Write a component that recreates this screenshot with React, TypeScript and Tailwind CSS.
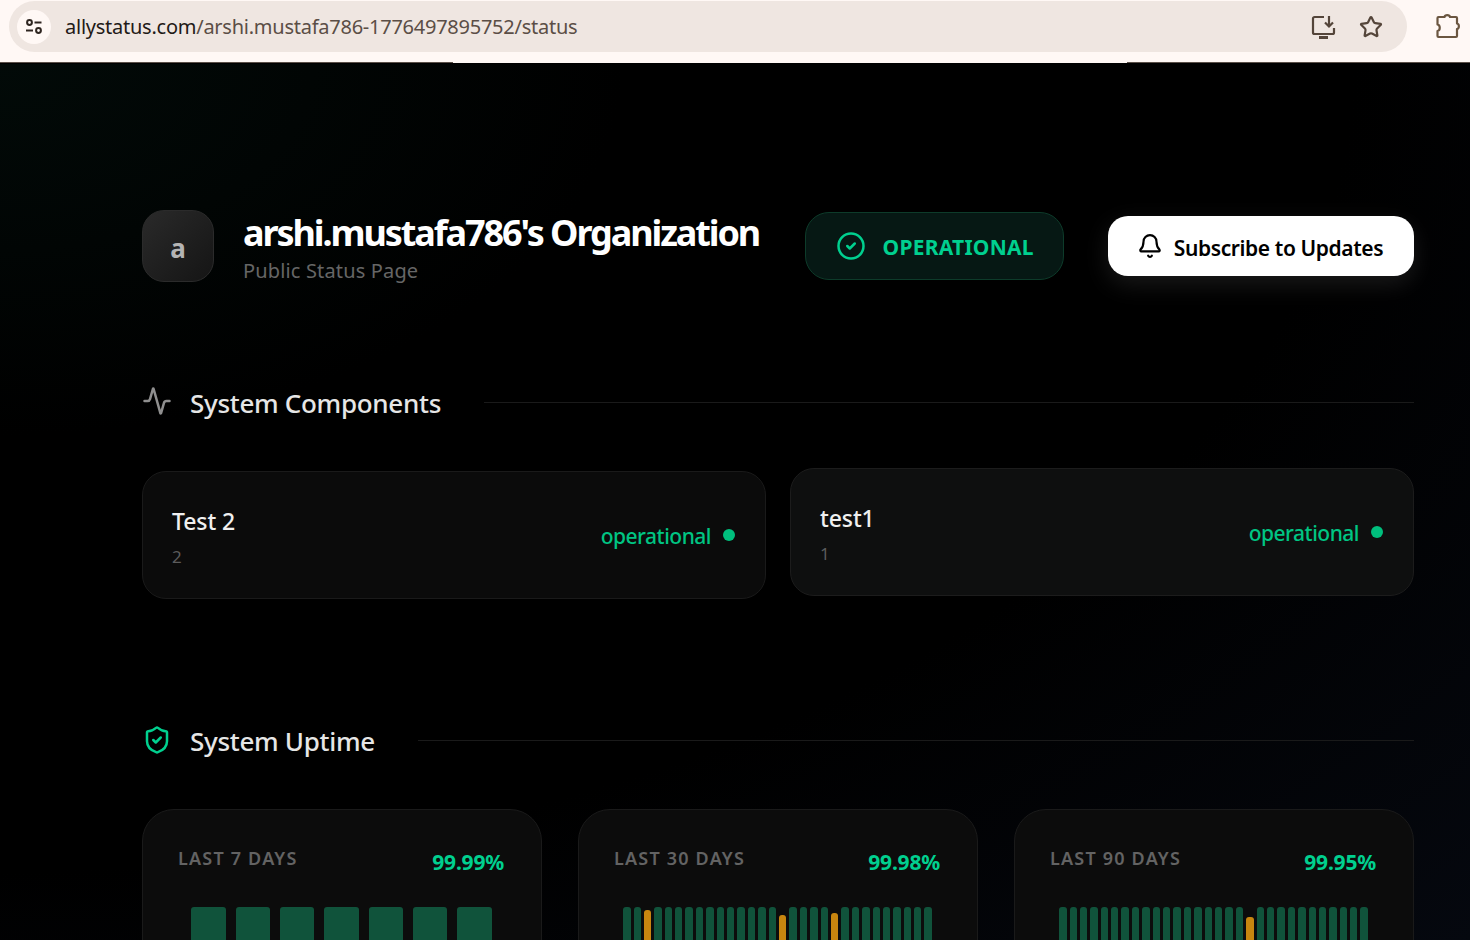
import { Activity, Bell, CircleCheck, ShieldCheck, Star } from 'lucide-react'

const font = { fontFamily: '"Noto Sans", "Open Sans", sans-serif' }

function UptimeCard({ label, value, count, amber }: { label: string; value: string; count: number; amber: Record<number, number> }) {
    const bars = Array.from({ length: count }, (_, i) => i)
    return (
        <div className="h-[200px] rounded-[32px] border border-[#1a1a1a] bg-[#0c0c0c] px-[35px] pt-[36px]">
            <div className="flex items-start justify-between">
                <span className="text-[18px] leading-6 font-semibold tracking-[1.2px] text-[#636363]">{label}</span>
                <span className="mt-[4px] pr-[2px] text-[21px] leading-6 font-bold tracking-[-0.2px] text-[#00d08f]">{value}</span>
            </div>
            <div className={count === 7 ? 'mt-[33px] flex h-24 justify-center gap-[10px] pr-[1px]' : 'mt-[33px] flex h-24 justify-center gap-[3px] pr-[1px]'}>
                {bars.map((i) => (
                    <div key={i} className={count === 7 ? 'flex h-full w-[34.4px] items-end' : 'flex h-full w-[7.4px] items-end'}>
                        <div
                            className={amber[i] ? 'w-full rounded-t-[3px] bg-[#c8860f]' : 'w-full rounded-t-[3px] bg-[#10533b]'}
                            style={{ height: `calc(100% - ${amber[i] ?? 0}px)` }}
                        />
                    </div>
                ))}
            </div>
        </div>
    )
}

function ComponentCard({ name, sub, raised }: { name: string; sub: string; raised?: boolean }) {
    return (
        <div className={raised
            ? 'flex h-32 -translate-y-[3px] items-center justify-between rounded-3xl border border-[#1c1c1c] bg-[#0e0f0f] pr-[30px] pl-[29px]'
            : 'flex h-32 items-center justify-between rounded-3xl border border-[#1a1a1a] bg-[#0b0b0b] pr-[30px] pl-[29px]'}>
            <div className="mt-[4px]">
                <div className="text-[23px] leading-8 font-medium tracking-[-0.1px] text-[#f0f0f0]">{name}</div>
                <div className="mt-[8px] text-[17px] leading-6 text-[#5c5c5c]">{sub}</div>
            </div>
            <div className="flex items-center gap-3">
                <span className="pt-[2px] text-[21px] leading-7 font-medium tracking-[-0.5px] text-[#00c583]">operational</span>
                <span className="-mt-[1px] size-3 rounded-full bg-[#00bf7d]" />
            </div>
        </div>
    )
}

export default function App() {
    return (
        <div className="h-[940px] w-[1470px] overflow-hidden bg-black" style={font}>
            {/* browser bar */}
            <div className="flex h-[63px] items-start bg-[#fff8f5]">
                <div className="mt-[1px] ml-[9px] flex h-[51px] w-[1398px] items-center rounded-full bg-[#efe6e1] pr-[24px] pl-[8px]">
                    <div className="flex size-[34px] items-center justify-center rounded-full bg-[#fff8f5]">
                        <svg width="20" height="20" viewBox="0 0 20 20" fill="none" stroke="#2e2520" strokeWidth="2">
                            <circle cx="5.5" cy="5.5" r="2.4" />
                            <path d="M10.5 5.5h7" />
                            <path d="M2 13.5h7" />
                            <circle cx="14.5" cy="13.5" r="2.4" />
                        </svg>
                    </div>
                    <div className="ml-[14px] text-[20px] tracking-[-0.25px] text-[#5b4e46]">
                        <span className="text-[#1f1a17]">allystatus.com</span>/arshi.mustafa786-1776497895752/status
                    </div>
                    <div className="ml-auto flex items-center gap-[22px]">
                        <svg width="27" height="27" viewBox="0 0 27 27" fill="none" stroke="#54453a" strokeWidth="2.2">
                            <path d="M14 4H4.5A1.5 1.5 0 0 0 3 5.5v14A1.5 1.5 0 0 0 4.5 21h18a1.5 1.5 0 0 0 1.5-1.5V15" />
                            <path d="M9 24.5h9" strokeWidth="3" />
                            <path d="M19 3v10M15 9.5l4 4 4-4" />
                        </svg>
                        <Star size={24} strokeWidth={2.2} color="#54453a" />
                    </div>
                </div>
                <svg className="mt-[12px] ml-[27px]" width="28" height="28" viewBox="0 0 28 28" fill="none" stroke="#6b5640" strokeWidth="2.2" strokeLinejoin="round">
                    <path d="M4.5 5h6c.5-2.5 5-2.5 5.5 0h6a1 1 0 0 1 1 1v5.5c2.5 .5 2.5 5 0 5.5V24a1 1 0 0 1-1 1H4.5a1 1 0 0 1-1-1v-5c3-.5 3-6 0-6.5V6a1 1 0 0 1 1-1z" />
                </svg>
            </div>
            <div className="flex h-[1px] -translate-y-[1px]">
                <div className="w-[453px] bg-[#5a4f48]" />
                <div className="w-[674px] bg-[#fff8f5]" />
                <div className="flex-1 bg-[#5a4f48]" />
            </div>

            {/* page */}
            <div className="h-[877px] bg-[radial-gradient(ellipse_at_0%_0%,#020a08_0%,#000_30%,#000_65%,#05080f_100%)] pt-[146px] pr-[56px] pl-[142px]">
                <header className="flex items-center">
                    <div className="flex size-[72px] items-center justify-center rounded-[22px] border border-[#2b2b2b] bg-gradient-to-br from-[#2a2a2a] to-[#151515] pt-[4px] text-[26px] font-bold text-[#b4b4b4]">
                        a
                    </div>
                    <div className="ml-[29px]">
                        <h1 className="text-[36px] leading-[46px] font-bold tracking-[-2.1px] text-white">arshi.mustafa786's Organization</h1>
                        <p className="mt-[4px] text-[20px] leading-[22px] tracking-[0.15px] text-[#666]">Public Status Page</p>
                    </div>
                    <div className="ml-[46px] flex h-[68px] w-[259px] items-center justify-center gap-[17px] rounded-3xl border border-[#0d3b2a] bg-[#061814]">
                        <CircleCheck size={30} strokeWidth={2} color="#00d08f" />
                        <span className="pt-[4px] text-[21px] font-bold tracking-[0.25px] text-[#00d08f]">OPERATIONAL</span>
                    </div>
                    <button className="ml-auto flex h-[60px] w-[306px] items-center justify-center gap-[11px] rounded-[20px] bg-white pr-[2px] text-[21px] font-semibold tracking-[-0.4px] text-black shadow-[0_8px_24px_rgba(255,255,255,0.1)]">
                        <Bell size={26} strokeWidth={2} />
                        <span className="pt-[6px]">Subscribe to Updates</span>
                    </button>
                </header>

                <section className="mt-[102px]">
                    <div className="flex items-center">
                        <Activity className="-translate-y-[1px]" size={30} strokeWidth={2} color="#8f8f8f" />
                        <h2 className="ml-[18px] translate-y-[1px] text-[26px] leading-9 font-medium tracking-[-0.3px] text-[#e6e6e6]">System Components</h2>
                        <div className="ml-[43px] h-[1px] flex-1 bg-[#1a1a1a]" />
                    </div>
                    <div className="mt-[51px] grid grid-cols-2 gap-6">
                        <ComponentCard name="Test 2" sub="2" />
                        <ComponentCard name="test1" sub="1" raised />
                    </div>
                </section>

                <section className="mt-[123px]">
                    <div className="flex items-center">
                        <ShieldCheck size={30} strokeWidth={2} color="#00d08f" />
                        <h2 className="ml-[18px] translate-y-[1px] text-[26px] leading-9 font-medium tracking-[-0.3px] text-[#e6e6e6]">System Uptime</h2>
                        <div className="ml-[43px] h-[1px] flex-1 bg-[#1a1a1a]" />
                    </div>
                    <div className="mt-[51px] grid grid-cols-3 gap-9">
                        <UptimeCard label="LAST 7 DAYS" value="99.99%" count={7} amber={{}} />
                        <UptimeCard label="LAST 30 DAYS" value="99.98%" count={30} amber={{ 2: 3, 15: 8, 20: 6 }} />
                        <UptimeCard label="LAST 90 DAYS" value="99.95%" count={30} amber={{ 18: 10 }} />
                    </div>
                </section>
            </div>
        </div>
    )
}
